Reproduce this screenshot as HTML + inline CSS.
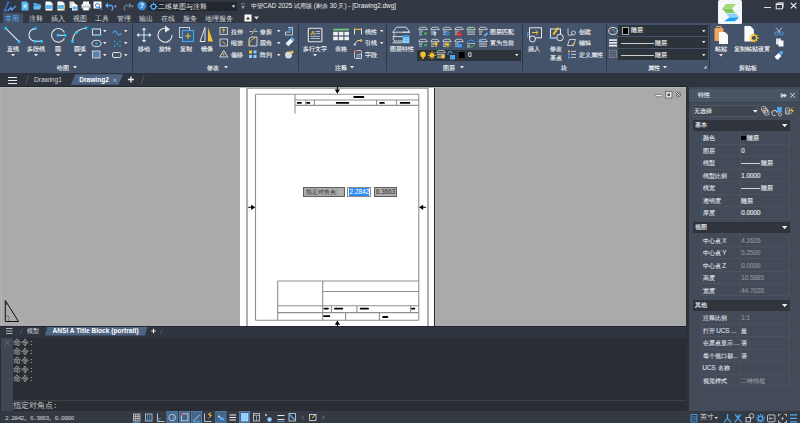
<!DOCTYPE html>
<html><head><meta charset="utf-8">
<style>
*{margin:0;padding:0;box-sizing:border-box}
html,body{width:800px;height:423px;overflow:hidden;background:#2b3039;font-family:"Liberation Sans",sans-serif;color:#e8e8e8}
.a{position:absolute}
.t{position:absolute;white-space:nowrap;line-height:1}
.lbl{font-size:6.5px;color:#e4e6ea}
.t{font-weight:500}
.s{-webkit-text-stroke:0.15px currentColor}
svg{position:absolute;overflow:visible}
</style></head><body>

<!-- title bar -->
<div class="a" style="left:0;top:0;width:800px;height:13px;background:#313843"></div>
<!-- ribbon tabs row -->
<div class="a" style="left:0;top:13px;width:800px;height:10px;background:#313843"></div>
<!-- ribbon panel -->
<div class="a" style="left:0;top:23px;width:800px;height:49.8px;background:#45536a"></div>
<!-- doc tab bar -->
<div class="a" style="left:0;top:72.8px;width:800px;height:14.2px;background:#2f353e"></div>
<!-- canvas -->
<div class="a" style="left:0;top:87px;width:686px;height:239px;background:#aaaaaa"></div>
<!-- paper -->
<div class="a" style="left:240px;top:87px;width:194px;height:239px;background:#fff"></div>
<div class="a" style="left:433.8px;top:87px;width:1.5px;height:239px;background:#262626"></div><div class="a" style="left:435.3px;top:87px;width:1px;height:239px;background:#b2b2b2"></div>
<!-- layout tab bar -->
<div class="a" style="left:0;top:326px;width:686px;height:11.6px;background:#2f353e"></div><div class="a" style="left:0;top:325.8px;width:686px;height:1.2px;background:#23272e"></div>
<!-- command area -->
<div class="a" style="left:0;top:337.6px;width:686px;height:73.4px;background:#2a2d33"></div>
<div class="a" style="left:1px;top:337.6px;width:12px;height:74.4px;background:#3e4753"></div>
<div class="a" style="left:13px;top:400px;width:673px;height:1px;background:#3c4149"></div>
<!-- properties panel -->
<div class="a" style="left:689px;top:87px;width:111px;height:324px;background:#424b57"></div>
<!-- status bar -->
<div class="a" style="left:0;top:411px;width:800px;height:12px;background:#343a43"></div>


<!-- ===== TITLE BAR CONTENT ===== -->
<svg style="left:3px;top:1px" width="14" height="12" viewBox="0 0 14 12"><path d="M5 1.5 L2 9.5" stroke="#3d6fe0" stroke-width="1.4" fill="none"/><circle cx="5" cy="1.6" r="1.3" fill="#3d6fe0"/><circle cx="2" cy="9.5" r="1.4" fill="#3d6fe0"/><path d="M4.5 10 L8 6.5 L8.5 9 L13 5" stroke="#5aa0f0" stroke-width="1.2" fill="none"/></svg>
<!-- qat icons -->
<svg style="left:21px;top:1px" width="8" height="10"><path d="M0.5 0.5h5l2 2v7h-7z" fill="#5cb8f2"/><path d="M4 3v4M2 5h4" stroke="#fff" stroke-width="0.8"/></svg>
<svg style="left:33px;top:2px" width="9" height="8"><path d="M0.5 1h3l1 1h3v1.5h-7z" fill="#4aa8e8"/><path d="M0.5 3.5h8l-1.5 4h-6.5z" fill="#66c0f5"/></svg>
<svg style="left:45px;top:1px" width="8" height="10"><path d="M0.5 0.5h5l2 2v7h-7z" fill="#fff"/><rect x="1" y="4" width="6" height="4" fill="#5cb8f2"/></svg>
<svg style="left:57px;top:1px" width="9" height="10"><path d="M0.5 0.5h5l2 2v7h-7z" fill="#fff"/><rect x="1" y="4" width="6" height="4" fill="#5cb8f2"/><path d="M6 9l2-4" stroke="#f0c020" stroke-width="1.2"/></svg>
<svg style="left:69px;top:1px" width="9" height="10"><path d="M0.5 0.5h4l1.5 1.5v5h-5.5z" fill="#ddd"/><path d="M3 3h4l1.5 1.5v5h-5.5z" fill="#fff"/><rect x="3.5" y="5.5" width="4.5" height="3" fill="#5cb8f2"/></svg>
<svg style="left:81px;top:1px" width="10" height="10"><rect x="2" y="0.5" width="6" height="3" fill="#fff"/><rect x="0.5" y="3" width="9" height="4.5" fill="#e8e8e8"/><rect x="2" y="6" width="6" height="3.5" fill="#fff" stroke="#555" stroke-width="0.4"/></svg>
<svg style="left:93px;top:1px" width="10" height="10"><rect x="0.5" y="0.5" width="8" height="7" fill="#fff"/><circle cx="4.5" cy="4.5" r="2" fill="none" stroke="#2c7bd0" stroke-width="1"/><path d="M6 6l3 3" stroke="#2c7bd0" stroke-width="1.2"/></svg>
<svg style="left:105px;top:2px" width="10" height="8"><path d="M2 3.5h4.5a3 3 0 0 1 0 5" stroke="#5aa8f0" stroke-width="1.3" fill="none"/><path d="M0 3.5l3-3v6z" fill="#5aa8f0"/></svg>
<div class="t" style="left:114px;top:4px;font-size:5px;color:#aab">▾</div>
<svg style="left:122px;top:2px" width="10" height="8"><path d="M8 3.5h-4.5a3 3 0 0 0 0 5" stroke="#6b7888" stroke-width="1.3" fill="none"/><path d="M10 3.5l-3-3v6z" fill="#6b7888"/></svg>
<div class="t" style="left:131px;top:4px;font-size:5px;color:#889">▾</div>
<svg style="left:137px;top:1px" width="10" height="10"><circle cx="4.8" cy="4.8" r="4.5" fill="#3b8fe0"/><text x="4.8" y="7.3" font-size="7" font-weight="bold" fill="#fff" text-anchor="middle" font-family="Liberation Sans">?</text></svg>
<div class="a" style="left:148px;top:2px;width:89px;height:9px;background:#22272e"></div>
<svg style="left:149px;top:2px" width="9" height="9" viewBox="0 0 9 9"><circle cx="4.5" cy="4.5" r="2.4" fill="none" stroke="#4fb0ff" stroke-width="1.2"/><path d="M4.5 0.5v1.5M4.5 7v1.5M0.5 4.5h1.5M7 4.5h1.5M1.7 1.7l1 1M6.3 6.3l1 1M1.7 7.3l1-1M6.3 2.7l1-1" stroke="#4fb0ff" stroke-width="1"/></svg>
<div class="t" style="left:158px;top:2.5px;font-size:7px;color:#e6e6e6">二维草图与注释</div>
<div class="t" style="left:231px;top:4px;font-size:5px;color:#ddd">▼</div>
<svg style="left:240px;top:3px" width="6" height="7"><path d="M1 1h4" stroke="#99a" stroke-width="0.8"/><path d="M1 3h4l-2 3z" fill="#99a"/></svg>
<div class="t" style="left:251px;top:3.3px;font-size:6.35px;letter-spacing:0px;color:#f0f0f0">中望CAD 2025 试用版 (剩余 30 天) - [Drawing2.dwg]</div>
<!-- logo -->
<div class="a" style="left:718px;top:0.4px;width:24px;height:24px;background:#f3f7fa;border-radius:1.5px"></div>
<svg style="left:718px;top:0px" width="24" height="24" viewBox="0 0 24 24"><path d="M8 4h10l-4 4.8h-10z" fill="#a6d87e"/><path d="M4 8.8h10l3 4.2h-9z" fill="#86c85a"/><path d="M8 13.4h10l3 4h-9.5z" fill="#86d2fb"/><path d="M11.5 17.4h9.5l-4 3.8h-11z" fill="#18a2f0"/></svg>
<!-- window buttons -->
<div class="a" style="left:764px;top:7.2px;width:6.5px;height:1.2px;background:#ddd"></div>
<svg style="left:775px;top:1px" width="10" height="9"><path d="M2.5 1.5h6v5" fill="none" stroke="#bbb" stroke-width="0.8"/><rect x="1.2" y="2.8" width="6.3" height="5" fill="none" stroke="#e6e6e6" stroke-width="1"/><path d="M1.2 3.4h6.3" stroke="#e6e6e6" stroke-width="1.2"/></svg>
<svg style="left:790px;top:1.5px" width="8" height="8"><path d="M0.8 0.8l5.6 5.6M6.4 0.8l-5.6 5.6" stroke="#eee" stroke-width="1.2"/></svg>

<!-- ribbon tabs -->
<div class="a" style="left:3px;top:13px;width:20px;height:10px;background:#45536a"></div>
<div class="t" style="left:5px;top:14.5px;font-size:7px;color:#4db4ff">常用</div>
<div class="t" style="left:29px;top:14.5px;font-size:7px;color:#d8dade">注释</div>
<div class="t" style="left:51px;top:14.5px;font-size:7px;color:#d8dade">插入</div>
<div class="t" style="left:73px;top:14.5px;font-size:7px;color:#d8dade">视图</div>
<div class="t" style="left:95px;top:14.5px;font-size:7px;color:#d8dade">工具</div>
<div class="t" style="left:117px;top:14.5px;font-size:7px;color:#d8dade">管理</div>
<div class="t" style="left:139px;top:14.5px;font-size:7px;color:#d8dade">输出</div>
<div class="t" style="left:161px;top:14.5px;font-size:7px;color:#d8dade">在线</div>
<div class="t" style="left:183px;top:14.5px;font-size:7px;color:#d8dade">服务</div>
<div class="t" style="left:205px;top:14.5px;font-size:7px;color:#d8dade">地理服务</div>
<svg style="left:244px;top:14px" width="16" height="8"><rect x="0.5" y="0.5" width="7" height="7" fill="#fff"/><path d="M2 5.5h4l-2-3z" fill="#333"/><path d="M10 2.5h5l-2.5 3z" fill="#ddd"/></svg>

<svg style="left:0px;top:24px" width="90" height="20" viewBox="0 0 90 20"><path d="M5.8 4.3L19.1 17.6" stroke="#e6e6e6" stroke-width="1.1"/><rect x="4.5" y="3.0" width="2.6" height="2.6" fill="#22c4ff"/><rect x="17.8" y="16.3" width="2.6" height="2.6" fill="#22c4ff"/><path d="M35.3 4.6A6.35 6.35 0 0 0 35.3 17.3H41.6" stroke="#e6e6e6" stroke-width="1.1" fill="none"/><rect x="34.0" y="3.3" width="2.6" height="2.6" fill="#22c4ff"/><rect x="34.0" y="16.0" width="2.6" height="2.6" fill="#22c4ff"/><rect x="40.300000000000004" y="16.0" width="2.6" height="2.6" fill="#22c4ff"/><path d="M64.5 8.5A6.8 6.8 0 1 0 64.5 14.2" stroke="#e6e6e6" stroke-width="1.1" fill="none"/><path d="M58 11.3H65" stroke="#e6e6e6" stroke-width="1"/><rect x="56.7" y="10.0" width="2.6" height="2.6" fill="#22c4ff"/><rect x="63.7" y="10.0" width="2.6" height="2.6" fill="#22c4ff"/><path d="M72.5 17.5Q73 6 86 4" stroke="#e6e6e6" stroke-width="1.1" fill="none"/><rect x="71.2" y="16.2" width="2.6" height="2.6" fill="#22c4ff"/><rect x="75.0" y="7.3" width="2.6" height="2.6" fill="#22c4ff"/><rect x="84.7" y="2.7" width="2.6" height="2.6" fill="#22c4ff"/></svg>
<div class="t s" style="left:-17.5px;top:45.8px;width:60px;text-align:center;font-size:6.4px;color:#eceef0">直线</div>
<div class="t s" style="left:5.799999999999997px;top:45.8px;width:60px;text-align:center;font-size:6.4px;color:#eceef0">多段线</div>
<div class="t s" style="left:28.0px;top:45.8px;width:60px;text-align:center;font-size:6.4px;color:#eceef0">圆</div>
<div class="t s" style="left:50.0px;top:45.8px;width:60px;text-align:center;font-size:6.4px;color:#eceef0">圆弧</div>
<svg style="left:10.5px;top:53.95px" width="4" height="2.5"><path d="M0 0h4l-2.0 2.5z" fill="#e8e8e8"/></svg>
<svg style="left:33.8px;top:53.95px" width="4" height="2.5"><path d="M0 0h4l-2.0 2.5z" fill="#e8e8e8"/></svg>
<svg style="left:56.0px;top:53.95px" width="4" height="2.5"><path d="M0 0h4l-2.0 2.5z" fill="#e8e8e8"/></svg>
<svg style="left:78.0px;top:53.95px" width="4" height="2.5"><path d="M0 0h4l-2.0 2.5z" fill="#e8e8e8"/></svg>
<svg style="left:90px;top:26px" width="40" height="34" viewBox="0 0 40 34"><rect x="2.5" y="3" width="8" height="6" fill="none" stroke="#e6e6e6" stroke-width="1"/><rect x="1.5" y="2.0" width="2" height="2" fill="#22c4ff"/><rect x="9.5" y="8.0" width="2" height="2" fill="#22c4ff"/><path d="M23 7q2-4 4 0t4 0" stroke="#4aa8f0" stroke-width="1.1" fill="none"/><ellipse cx="6.5" cy="17.5" rx="4.5" ry="3.2" fill="none" stroke="#e6e6e6" stroke-width="1"/><rect x="5.6" y="16.6" width="1.8" height="1.8" fill="#22c4ff"/><rect x="23.85" y="14.85" width="1.3" height="1.3" fill="#22c4ff"/><rect x="29.35" y="14.85" width="1.3" height="1.3" fill="#22c4ff"/><rect x="26.55" y="17.150000000000002" width="1.3" height="1.3" fill="#22c4ff"/><rect x="23.85" y="19.35" width="1.3" height="1.3" fill="#22c4ff"/><rect x="29.35" y="19.35" width="1.3" height="1.3" fill="#22c4ff"/><rect x="2.5" y="25" width="7.5" height="7" fill="#5a7fb0" stroke="#e6e6e6" stroke-width="0.8"/><rect x="22.5" y="26.5" width="8.5" height="5" rx="1.5" fill="none" stroke="#e6e6e6" stroke-width="1"/></svg>
<svg style="left:103.25px;top:30.4px" width="3.5" height="2.2"><path d="M0 0h3.5l-1.75 2.2z" fill="#e8e8e8"/></svg>
<svg style="left:124.25px;top:30.4px" width="3.5" height="2.2"><path d="M0 0h3.5l-1.75 2.2z" fill="#e8e8e8"/></svg>
<svg style="left:103.25px;top:42.4px" width="3.5" height="2.2"><path d="M0 0h3.5l-1.75 2.2z" fill="#e8e8e8"/></svg>
<svg style="left:124.25px;top:42.4px" width="3.5" height="2.2"><path d="M0 0h3.5l-1.75 2.2z" fill="#e8e8e8"/></svg>
<svg style="left:103.25px;top:53.9px" width="3.5" height="2.2"><path d="M0 0h3.5l-1.75 2.2z" fill="#e8e8e8"/></svg>
<svg style="left:124.25px;top:53.9px" width="3.5" height="2.2"><path d="M0 0h3.5l-1.75 2.2z" fill="#e8e8e8"/></svg>
<div class="t s" style="left:33.0px;top:64.5px;width:60px;text-align:center;font-size:6.4px;color:#eceef0">绘图</div>
<svg style="left:72.5px;top:66.3px" width="4" height="2.4"><path d="M0 0h4l-2.0 2.4z" fill="#e8e8e8"/></svg>
<div class="a" style="left:132px;top:24px;width:1px;height:47px;background:#2f3946"></div>
<svg style="left:132px;top:24px" width="90" height="22" viewBox="0 0 90 22"><path d="M12 5v12M6 11h12" stroke="#cfe3f5" stroke-width="1.1"/><path d="M12 3.5l-2.3 2.6h4.6zM12 18.5l-2.3-2.6h4.6zM4.5 11l2.6-2.3v4.6zM19.5 11l-2.6-2.3v4.6z" fill="#cfe3f5"/><path d="M37 5.5A7 7 0 1 0 40 11" stroke="#e6e6e6" stroke-width="1.1" fill="none"/><path d="M33 1.5l5 4-5 3z" fill="#e6e6e6"/><rect x="47.5" y="3.5" width="10" height="10" fill="none" stroke="#c8d0d8" stroke-width="1"/><rect x="50.5" y="6.5" width="11" height="11" fill="#3c5a7c" stroke="#4aa8f0" stroke-width="1.1"/><path d="M56 9v6M53 12h6" stroke="#f2c230" stroke-width="1"/><path d="M73 3.5L68 17.5H73z" fill="none" stroke="#e6e6e6" stroke-width="1"/><path d="M76 3.5L81 17.5H76z" fill="#f2c230"/></svg>
<div class="t s" style="left:114.0px;top:45.8px;width:60px;text-align:center;font-size:6.4px;color:#eceef0">移动</div>
<div class="t s" style="left:135.0px;top:45.8px;width:60px;text-align:center;font-size:6.4px;color:#eceef0">旋转</div>
<div class="t s" style="left:156.0px;top:45.8px;width:60px;text-align:center;font-size:6.4px;color:#eceef0">复制</div>
<div class="t s" style="left:177.0px;top:45.8px;width:60px;text-align:center;font-size:6.4px;color:#eceef0">镜像</div>
<svg style="left:219px;top:26px" width="80" height="34" viewBox="0 0 80 34"><rect x="1" y="1.5" width="7.5" height="7" fill="none" stroke="#e6e6e6" stroke-width="0.8"/><path d="M4.75 3v4M3 4.5l1.75-1.7 1.75 1.7" stroke="#f2c230" stroke-width="1" fill="none"/><rect x="1" y="13" width="7.5" height="7" fill="none" stroke="#e6e6e6" stroke-width="0.8"/><path d="M3.5 15.5l3 3" stroke="#f2c230" stroke-width="1"/><path d="M4.75 24.5l4 6.5h-8z" fill="none" stroke="#e6e6e6" stroke-width="0.9"/><path d="M4.75 27v2.5" stroke="#f2c230" stroke-width="1"/><path d="M30.5 5.5h3M35.5 5.5h3" stroke="#c8d0d8" stroke-width="0.9"/><path d="M32.5 8.5l4-6" stroke="#d8c070" stroke-width="0.9"/><path d="M30 20V14a3 3 0 0 1 3-3h5v9z" fill="none" stroke="#e6e6e6" stroke-width="0.9"/><path d="M30 20q0-6 6-8" stroke="#f2c230" stroke-width="0.9" fill="none"/><rect x="30" y="24.5" width="3" height="3" fill="#f2c230"/><rect x="34.5" y="24.5" width="3" height="3" fill="#8cd0ff"/><rect x="30" y="29" width="3" height="3" fill="#8cd0ff"/><rect x="34.5" y="29" width="3" height="3" fill="#8cd0ff"/><path d="M69 1.5h4.5v7.5h-7v-3h5" fill="none" stroke="#e0e4e8" stroke-width="0.8"/><rect x="69.5" y="2.5" width="3" height="2" fill="#4aa8f0"/><path d="M66.5 17.5l5-5 2.8 2.8-5 5z" fill="#f0f4f8"/><path d="M71.5 12.5l1.5-1.5 2.8 2.8-1.5 1.5z" fill="#5ab4f8"/><circle cx="69.5" cy="29" r="3.5" fill="#d8d8d8"/><circle cx="73" cy="26" r="1.5" fill="#f2c230"/></svg>
<div class="t s" style="left:231px;top:28.5px;font-size:6.4px;color:#eceef0;">拉伸</div>
<div class="t s" style="left:231px;top:40.2px;font-size:6.4px;color:#eceef0;">缩放</div>
<div class="t s" style="left:231px;top:51.8px;font-size:6.4px;color:#eceef0;">偏移</div>
<div class="t s" style="left:260px;top:28.5px;font-size:6.4px;color:#eceef0;">修剪</div>
<div class="t s" style="left:260px;top:40.2px;font-size:6.4px;color:#eceef0;">圆角</div>
<div class="t s" style="left:260px;top:51.8px;font-size:6.4px;color:#eceef0;">阵列</div>
<svg style="left:276.55px;top:30.4px" width="3.5" height="2.2"><path d="M0 0h3.5l-1.75 2.2z" fill="#e8e8e8"/></svg>
<svg style="left:276.55px;top:42.199999999999996px" width="3.5" height="2.2"><path d="M0 0h3.5l-1.75 2.2z" fill="#e8e8e8"/></svg>
<svg style="left:276.55px;top:53.9px" width="3.5" height="2.2"><path d="M0 0h3.5l-1.75 2.2z" fill="#e8e8e8"/></svg>
<div class="t s" style="left:183.2px;top:64.5px;width:60px;text-align:center;font-size:6.4px;color:#eceef0">修改</div>
<svg style="left:223.5px;top:66.3px" width="4" height="2.4"><path d="M0 0h4l-2.0 2.4z" fill="#e8e8e8"/></svg>
<div class="a" style="left:298px;top:24px;width:1px;height:47px;background:#2f3946"></div>
<svg style="left:300px;top:24px" width="60" height="22" viewBox="0 0 60 22"><rect x="8.3" y="4.2" width="13.6" height="13.6" rx="0.8" fill="none" stroke="#e6e6e6" stroke-width="1.1"/><text x="10.4" y="10.6" font-size="6.2" font-family="Liberation Sans" font-weight="bold" fill="#f2c230">A</text><path d="M15.5 7.5h4.5M15.5 9.5h4.5M10.5 12.3h9.5M10.5 14.5h9.5" stroke="#c8d4e0" stroke-width="0.8"/><rect x="33.2" y="4.8" width="15.8" height="1.6" fill="#6dd36d"/><rect x="33.2" y="7.8" width="4.6" height="3.6" fill="#f0f0f0"/><rect x="38.8" y="7.8" width="4.6" height="3.6" fill="#f0f0f0"/><rect x="44.4" y="7.8" width="4.6" height="3.6" fill="#f0f0f0"/><rect x="33.2" y="12.6" width="4.6" height="3.6" fill="#f0f0f0"/><rect x="38.8" y="12.6" width="4.6" height="3.6" fill="#f0f0f0"/><rect x="44.4" y="12.6" width="4.6" height="3.6" fill="#f0f0f0"/></svg>
<div class="t s" style="left:285.0px;top:45.8px;width:60px;text-align:center;font-size:6.4px;color:#eceef0">多行文字</div>
<svg style="left:313.0px;top:53.95px" width="4" height="2.5"><path d="M0 0h4l-2.0 2.5z" fill="#e8e8e8"/></svg>
<div class="t s" style="left:311.0px;top:45.8px;width:60px;text-align:center;font-size:6.4px;color:#eceef0">表格</div>
<svg style="left:353px;top:26px" width="10" height="34" viewBox="0 0 10 34"><path d="M1.5 2.5v6M8.5 2.5v6" stroke="#e8e8e8" stroke-width="1"/><path d="M1.5 3.3h7" stroke="#f2c230" stroke-width="1.1"/><path d="M1.5 18.5l3-4h4" stroke="#e6e6e6" stroke-width="0.9" fill="none"/><circle cx="8" cy="14.5" r="1.3" fill="#f2c230"/><circle cx="1.8" cy="18.5" r="1.1" fill="#e6e6e6"/><rect x="1.5" y="24.5" width="7" height="8" rx="1" fill="none" stroke="#e6e6e6" stroke-width="0.8"/><rect x="1.5" y="24.2" width="3" height="1.6" fill="#d04848"/><rect x="4" y="28.3" width="4.5" height="4.2" rx="0.8" fill="none" stroke="#e6e6e6" stroke-width="0.7"/><rect x="5.3" y="29.5" width="2" height="2" fill="#4aa8f0"/></svg>
<div class="t s" style="left:365px;top:28.5px;font-size:6.4px;color:#eceef0;">线性</div>
<div class="t s" style="left:365px;top:40.2px;font-size:6.4px;color:#eceef0;">引线</div>
<div class="t s" style="left:365px;top:51.8px;font-size:6.4px;color:#eceef0;">字段</div>
<svg style="left:380.25px;top:30.4px" width="3.5" height="2.2"><path d="M0 0h3.5l-1.75 2.2z" fill="#e8e8e8"/></svg>
<svg style="left:380.25px;top:42.199999999999996px" width="3.5" height="2.2"><path d="M0 0h3.5l-1.75 2.2z" fill="#e8e8e8"/></svg>
<div class="t s" style="left:311.0px;top:64.5px;width:60px;text-align:center;font-size:6.4px;color:#eceef0">注释</div>
<svg style="left:349.5px;top:66.3px" width="4" height="2.4"><path d="M0 0h4l-2.0 2.4z" fill="#e8e8e8"/></svg>
<div class="a" style="left:386px;top:24px;width:1px;height:47px;background:#2f3946"></div>
<svg style="left:390px;top:24px" width="24" height="22" viewBox="0 0 24 22"><path d="M6.5 3.2h9.5l3.8 5h-17z" fill="none" stroke="#e6e6e6" stroke-width="0.9"/><path d="M2.8 8.2l2 2.2-2 2.2h10M4.8 12.6l-2 2.2 2 2.2h8M4.8 17l-2 1.8h9.7M12.8 8.2h7" stroke="#e6e6e6" stroke-width="0.9" fill="none"/><rect x="12.7" y="11.6" width="6.6" height="7.6" fill="#8fd2ff"/><rect x="12.7" y="11.6" width="6.6" height="1.6" fill="#2c9cf0"/><path d="M14 14.5h4M14 16.5h4M16 13.5v5" stroke="#3a9ae8" stroke-width="0.4"/></svg>
<div class="t s" style="left:372.0px;top:45.8px;width:60px;text-align:center;font-size:6.4px;color:#eceef0">图层特性</div>
<svg style="left:0;top:0" width="800" height="72"><path d="M420.2 27.3H425.8L427.3 29.6H418.7Z" fill="none" stroke="#d8dce0" stroke-width="0.8"/><path d="M419 31.2h4M419 32.8h3M419 34.4h3" stroke="#d8dce0" stroke-width="0.7"/><circle cx="425.5" cy="33.6" r="1.3" fill="#38d048"/><path d="M419 35h3.5" stroke="#3a9cf0" stroke-width="0.8"/><path d="M432.2 27.3H437.8L439.3 29.6H430.7Z" fill="none" stroke="#d8dce0" stroke-width="0.8"/><path d="M431 31.2h4M431 32.8h3M431 34.4h3" stroke="#d8dce0" stroke-width="0.7"/><path d="M435 31.5v4.5M433.5 33h3" stroke="#dfefff" stroke-width="1.2"/><path d="M444.2 27.3H449.8L451.3 29.6H442.7Z" fill="none" stroke="#d8dce0" stroke-width="0.8"/><path d="M443 31.2h4M443 32.8h3M443 34.4h3" stroke="#d8dce0" stroke-width="0.7"/><circle cx="447" cy="33.5" r="2" fill="none" stroke="#3a9cf0" stroke-width="0.9"/><path d="M445.6 32.1l2.8 2.8M448.4 32.1l-2.8 2.8" stroke="#3a9cf0" stroke-width="0.6"/><path d="M456.2 27.3H461.8L463.3 29.6H454.7Z" fill="none" stroke="#d8dce0" stroke-width="0.8"/><path d="M455 31.2h4M455 32.8h3M455 34.4h3" stroke="#d8dce0" stroke-width="0.7"/><rect x="457" y="33" width="4.5" height="3.2" fill="#e03838"/><path d="M457.8 33v-1a1.45 1.45 0 0 1 2.9 0v1" stroke="#e03838" stroke-width="0.7" fill="none"/><path d="M468.2 27.3H473.8L475.3 29.6H466.7Z" fill="none" stroke="#d8dce0" stroke-width="0.8"/><path d="M467 31.2h8M467 32.8h8M467 34.4h8" stroke="#d8dce0" stroke-width="0.7"/><path d="M468.5 29.5l1.5-1.6 1.5 1.6M470 28.2v3" stroke="#38d048" stroke-width="0.9" fill="none"/><path d="M480.2 27.3H485.8L487.3 29.6H478.7Z" fill="none" stroke="#d8dce0" stroke-width="0.8"/><path d="M479 31.2h4M479 32.8h3M479 34.4h3" stroke="#d8dce0" stroke-width="0.7"/><path d="M483.5 35.5l3.5-3 1.2 1.2-3.5 3z" fill="#5ab4f8"/><path d="M420.2 39.300000000000004H425.8L427.3 41.6H418.7Z" fill="none" stroke="#d8dce0" stroke-width="0.8"/><path d="M419 43.2h4M419 44.800000000000004h3M419 46.400000000000006h3" stroke="#d8dce0" stroke-width="0.7"/><circle cx="425.5" cy="45" r="1.3" fill="#38d048"/><path d="M419 46.3h3.5" stroke="#3a9cf0" stroke-width="0.8"/><path d="M432.2 39.300000000000004H437.8L439.3 41.6H430.7Z" fill="none" stroke="#d8dce0" stroke-width="0.8"/><path d="M431 43.2h4M431 44.800000000000004h3M431 46.400000000000006h3" stroke="#d8dce0" stroke-width="0.7"/><circle cx="436" cy="43.8" r="1.7" fill="#f2c230"/><rect x="435.3" y="45.2" width="1.4" height="1.6" fill="#f2c230"/><path d="M444.2 39.300000000000004H449.8L451.3 41.6H442.7Z" fill="none" stroke="#d8dce0" stroke-width="0.8"/><path d="M443 43.2h4M443 44.800000000000004h3M443 46.400000000000006h3" stroke="#d8dce0" stroke-width="0.7"/><circle cx="447.5" cy="44.5" r="1.6" fill="#f2c230"/><circle cx="447.5" cy="44.5" r="2.6" fill="none" stroke="#f2c230" stroke-width="0.8" stroke-dasharray="0.9 0.7"/><path d="M456.2 39.300000000000004H461.8L463.3 41.6H454.7Z" fill="none" stroke="#d8dce0" stroke-width="0.8"/><path d="M455 43.2h4M455 44.800000000000004h3M455 46.400000000000006h3" stroke="#d8dce0" stroke-width="0.7"/><rect x="457.5" y="44.2" width="4.5" height="3.2" fill="#3aa0ff"/><path d="M456.5 44v-1a1.45 1.45 0 0 1 2.9 0" stroke="#3aa0ff" stroke-width="0.7" fill="none"/><path d="M480.2 39.300000000000004H485.8L487.3 41.6H478.7Z" fill="none" stroke="#d8dce0" stroke-width="0.8"/><path d="M479 43.2h8M479 44.800000000000004h8M479 46.400000000000006h8" stroke="#d8dce0" stroke-width="0.7"/><rect x="479" y="39.2" width="3" height="2" fill="#3aa0ff"/><path d="M467 42.5q4-5 8 0" stroke="#3aa0ff" stroke-width="0.9" fill="none"/><path d="M467 43.5h8M467 45.3h3M467 47h3" stroke="#d8dce0" stroke-width="0.7"/><path d="M469.5 45.5l1.8 1.8 3.5-3" stroke="#38d048" stroke-width="1" fill="none"/></svg>
<div class="t s" style="left:490px;top:28.5px;font-size:6.4px;color:#eceef0;">图层匹配</div>
<div class="t s" style="left:490px;top:40.2px;font-size:6.4px;color:#eceef0;">置为当前</div>
<div class="a" style="left:417px;top:50px;width:103.5px;height:10.5px;background:#2d333b"></div>
<svg style="left:417px;top:50px" width="60" height="11" viewBox="0 0 60 11"><ellipse cx="6" cy="4.5" rx="2.8" ry="3" fill="#f2c230"/><rect x="5" y="7" width="2" height="2" fill="#cfa020"/><circle cx="15" cy="5.3" r="2.3" fill="#f2c230"/><path d="M15 1v8.6M10.7 5.3h8.6M12 2.3l6 6M18 2.3l-6 6" stroke="#f2c230" stroke-width="0.8"/><path d="M21.2 0.6000000000000001H26.8L28.3 2.9H19.7Z" fill="none" stroke="#d8dce0" stroke-width="0.8"/><path d="M20 4.5h8M20 6.1h8M20 7.699999999999999h8" stroke="#d8dce0" stroke-width="0.7"/><circle cx="26" cy="6.5" r="2" fill="#f2c230"/><path d="M31 5V3.5a2 2 0 0 1 4 0" stroke="#4aa8f0" stroke-width="1" fill="none"/><rect x="33" y="5" width="5" height="4.5" fill="#4aa8f0"/><rect x="41.5" y="1.7" width="6.5" height="7" fill="#000" stroke="#555" stroke-width="0.4"/></svg>
<div class="t s" style="left:468px;top:52.2px;font-size:6.5px;color:#e8e8e8;">0</div>
<svg style="left:515.25px;top:54.199999999999996px" width="3.5" height="2.2"><path d="M0 0h3.5l-1.75 2.2z" fill="#e8e8e8"/></svg>
<div class="t s" style="left:419.0px;top:64.5px;width:60px;text-align:center;font-size:6.4px;color:#eceef0">图层</div>
<svg style="left:460.0px;top:66.3px" width="4" height="2.4"><path d="M0 0h4l-2.0 2.4z" fill="#e8e8e8"/></svg>
<div class="a" style="left:522px;top:24px;width:1px;height:47px;background:#2f3946"></div>
<svg style="left:522px;top:24px" width="45" height="22" viewBox="0 0 45 22"><rect x="7.5" y="3.8" width="12" height="10" fill="none" stroke="#e6e6e6" stroke-width="1"/><path d="M10 8.5h5.5M13.8 6.3l2.2 2.2-2.2 2.2" stroke="#f2c230" stroke-width="1" fill="none"/><circle cx="10.5" cy="15" r="3" fill="#45536a" stroke="#e6e6e6" stroke-width="1"/><path d="M7.2 8.5h-1.5v5" stroke="#4aa8f0" stroke-width="0.9" fill="none"/><rect x="28.5" y="5" width="10" height="9" fill="none" stroke="#e6e6e6" stroke-width="1"/><path d="M30.5 10l5-7 1.5 1.2-5 7z" fill="#f2c230"/><circle cx="38" cy="13.5" r="3.3" fill="#45536a" stroke="#e6e6e6" stroke-width="1"/><rect x="27.5" y="13" width="1.8" height="1.8" fill="#22c4ff"/></svg>
<div class="t s" style="left:504.29999999999995px;top:45.8px;width:60px;text-align:center;font-size:6.4px;color:#eceef0">插入</div>
<div class="t s" style="left:525.5px;top:45.8px;width:60px;text-align:center;font-size:6.4px;color:#eceef0">修改</div>
<div class="t s" style="left:525.5px;top:54.6px;width:60px;text-align:center;font-size:6.4px;color:#eceef0">基点</div>
<svg style="left:566px;top:26px" width="12" height="34" viewBox="0 0 12 34"><path d="M2 2.5v5a2 2 0 0 0 4 0" stroke="#e6e6e6" stroke-width="0.8" fill="none"/><circle cx="7.5" cy="7" r="2" fill="none" stroke="#e6e6e6" stroke-width="0.8"/><path d="M1.5 19.5l2-6h6l-2 6z" fill="none" stroke="#e6e6e6" stroke-width="0.8"/><path d="M6 19l3-3" stroke="#f2c230" stroke-width="1"/><rect x="2" y="24.5" width="1.8" height="1.8" fill="#f2c230"/><rect x="2" y="27.5" width="1.8" height="1.8" fill="#4aa8f0"/><rect x="2" y="30.5" width="1.8" height="1.8" fill="#4aa8f0"/><path d="M5 25.4h5M5 28.4h5M5 31.4h5" stroke="#e6e6e6" stroke-width="0.8"/></svg>
<div class="t s" style="left:579px;top:28.5px;font-size:6.4px;color:#eceef0;">创建</div>
<div class="t s" style="left:579px;top:40.2px;font-size:6.4px;color:#eceef0;">编辑</div>
<div class="t s" style="left:579px;top:51.8px;font-size:6.4px;color:#eceef0;">定义属性</div>
<div class="t s" style="left:533.5px;top:64.5px;width:60px;text-align:center;font-size:6.4px;color:#eceef0">块</div>
<div class="a" style="left:606px;top:24px;width:1px;height:47px;background:#2f3946"></div>
<svg style="left:608px;top:26px" width="10" height="34" viewBox="0 0 10 34"><ellipse cx="5" cy="5" rx="4.3" ry="3.5" fill="none" stroke="#e6e6e6" stroke-width="0.9"/><circle cx="3.5" cy="4.3" r="0.9" fill="#e04040"/><circle cx="5.5" cy="3.6" r="0.9" fill="#40c040"/><circle cx="6.4" cy="5.6" r="0.9" fill="#4090f0"/><rect x="1" y="13.3" width="8" height="1.6" fill="#f0f0f0"/><rect x="1" y="16" width="8" height="1.6" fill="#f0f0f0"/><rect x="1" y="18.7" width="8" height="1.8" fill="#f0f0f0"/><rect x="1.5" y="24.5" width="7" height="7" fill="none" stroke="#889" stroke-width="0.8"/><path d="M2.5 26.5h5M2.5 28.5h5M2.5 30h5" stroke="#889" stroke-width="0.6"/></svg>
<div class="a" style="left:618.4px;top:25.3px;width:89.3px;height:10.7px;background:#2d333b"></div>
<svg style="left:702.25px;top:29.549999999999997px" width="3.5" height="2.2"><path d="M0 0h3.5l-1.75 2.2z" fill="#e8e8e8"/></svg>
<div class="a" style="left:618.4px;top:37.4px;width:89.3px;height:10.200000000000003px;background:#2d333b"></div>
<svg style="left:702.25px;top:41.4px" width="3.5" height="2.2"><path d="M0 0h3.5l-1.75 2.2z" fill="#e8e8e8"/></svg>
<div class="a" style="left:618.4px;top:49.3px;width:89.3px;height:10.700000000000003px;background:#2d333b"></div>
<svg style="left:702.25px;top:53.55px" width="3.5" height="2.2"><path d="M0 0h3.5l-1.75 2.2z" fill="#e8e8e8"/></svg>
<div class="a" style="left:621.5px;top:27px;width:7.5px;height:7.5px;background:#000;border:0.6px solid #aaa"></div>
<div class="t s" style="left:631px;top:27.3px;font-size:6.3px;color:#e8e8e8;">随层</div>
<div class="a" style="left:621px;top:42.6px;width:33px;height:0.9px;background:#d0d0d0"></div>
<div class="a" style="left:621px;top:54.8px;width:33px;height:0.9px;background:#d0d0d0"></div>
<div class="t s" style="left:654.5px;top:40.0px;font-size:6.3px;color:#e8e8e8;">随层</div>
<div class="t s" style="left:654.5px;top:52.0px;font-size:6.3px;color:#e8e8e8;">随层</div>
<div class="t s" style="left:623.6px;top:64.5px;width:60px;text-align:center;font-size:6.4px;color:#eceef0">属性</div>
<svg style="left:662.5px;top:66.3px" width="4" height="2.4"><path d="M0 0h4l-2.0 2.4z" fill="#e8e8e8"/></svg>
<svg style="left:703px;top:65px" width="4" height="4" viewBox="0 0 4 4"><path d="M3.5 0.5v3h-3z" fill="#ccc"/></svg>
<div class="a" style="left:709px;top:24px;width:1px;height:47px;background:#2f3946"></div>
<svg style="left:710px;top:24px" width="80" height="22" viewBox="0 0 80 22"><rect x="4.5" y="4" width="9" height="13" rx="1" fill="#f0a860"/><rect x="7" y="2.5" width="4" height="3" fill="none" stroke="#f0a860" stroke-width="1"/><path d="M9 8h6l3 3v9h-9z" fill="#fafafa"/><g transform="translate(-2.6,-0.6)"><path d="M37 2.5h6l3.5 3.5v12h-9.5z" fill="#fafafa"/><circle cx="46.5" cy="14.5" r="2.6" fill="#3b4a6a" stroke="#f2c230" stroke-width="1.3"/><circle cx="46.5" cy="14.5" r="3.9" fill="none" stroke="#f2c230" stroke-width="1.3" stroke-dasharray="1.2 1.1"/></g><path d="M66 3.5l4 5M72 3.5l-4 5" stroke="#b0c8e0" stroke-width="0.9"/><circle cx="66.5" cy="9.5" r="1.7" fill="none" stroke="#4aa8f0" stroke-width="0.9"/><circle cx="71.5" cy="9.5" r="1.7" fill="none" stroke="#4aa8f0" stroke-width="0.9"/><rect x="66" y="14.5" width="5" height="6" fill="#d8e0e8"/><rect x="68.5" y="16.5" width="5" height="6" fill="#fafafa"/></svg>
<svg style="left:773px;top:50px" width="11" height="10" viewBox="0 0 11 10"><path d="M1.5 7l4-4 3 3-4 4z" fill="#fafafa"/><path d="M5.5 3l3-2.5 2 2-2.5 3z" fill="#4aa8f0"/></svg>
<div class="t s" style="left:691.0px;top:45.8px;width:60px;text-align:center;font-size:6.4px;color:#eceef0">粘贴</div>
<svg style="left:719.0px;top:53.95px" width="4" height="2.5"><path d="M0 0h4l-2.0 2.5z" fill="#e8e8e8"/></svg>
<div class="t s" style="left:721.5px;top:45.8px;width:60px;text-align:center;font-size:6.4px;color:#eceef0">复制粘贴设置</div>
<div class="t s" style="left:718.0px;top:64.5px;width:60px;text-align:center;font-size:6.4px;color:#eceef0">剪贴板</div><div class="a" style="left:1px;top:87px;width:685px;height:1px;background:#b6b6b6"></div>
<div class="a" style="left:1px;top:87px;width:1px;height:239px;background:#b4b4b4"></div>
<svg style="left:0;top:0" width="800" height="423" viewBox="0 0 800 423"><defs><clipPath id="cv"><rect x="0" y="87" width="686" height="239"/></clipPath></defs><g clip-path="url(#cv)"><line x1="247" y1="88.3" x2="428" y2="88.3" stroke="#a2a2a2" stroke-width="1.6"/><line x1="247" y1="88.3" x2="247" y2="330" stroke="#a2a2a2" stroke-width="1.7"/><line x1="428" y1="88.3" x2="428" y2="330" stroke="#a2a2a2" stroke-width="1.7"/><line x1="255.5" y1="94.2" x2="418.8" y2="94.2" stroke="#8f8f8f" stroke-width="1.1"/><line x1="255.5" y1="94.2" x2="255.5" y2="320.3" stroke="#8f8f8f" stroke-width="1.1"/><line x1="418.8" y1="94.2" x2="418.8" y2="320.3" stroke="#8f8f8f" stroke-width="1.1"/><line x1="255.5" y1="320.3" x2="418.8" y2="320.3" stroke="#8f8f8f" stroke-width="1.1"/><line x1="295" y1="94.2" x2="295" y2="113.6" stroke="#8f8f8f" stroke-width="1.1"/><line x1="295" y1="100" x2="418.8" y2="100" stroke="#8f8f8f" stroke-width="1.1"/><line x1="295" y1="105.4" x2="418.8" y2="105.4" stroke="#8f8f8f" stroke-width="1.1"/><line x1="305.8" y1="100" x2="305.8" y2="105.4" stroke="#8f8f8f" stroke-width="1.1"/><line x1="314.4" y1="100" x2="314.4" y2="105.4" stroke="#8f8f8f" stroke-width="1.1"/><line x1="376.5" y1="100" x2="376.5" y2="105.4" stroke="#8f8f8f" stroke-width="1.1"/><line x1="396.5" y1="100" x2="396.5" y2="105.4" stroke="#8f8f8f" stroke-width="1.1"/><line x1="354.1" y1="97" x2="363.4" y2="97" stroke="#000" stroke-width="1.8" stroke-linecap="round"/><line x1="297.70000000000005" y1="102.9" x2="301.0" y2="102.9" stroke="#000" stroke-width="1.8" stroke-linecap="round"/><line x1="307.20000000000005" y1="102.9" x2="309.4" y2="102.9" stroke="#000" stroke-width="1.8" stroke-linecap="round"/><line x1="336.70000000000005" y1="102.9" x2="348.29999999999995" y2="102.9" stroke="#000" stroke-width="1.8" stroke-linecap="round"/><line x1="380.1" y1="102.9" x2="383.9" y2="102.9" stroke="#000" stroke-width="1.8" stroke-linecap="round"/><line x1="400.6" y1="102.9" x2="409.4" y2="102.9" stroke="#000" stroke-width="1.8" stroke-linecap="round"/><line x1="277.7" y1="281" x2="418.8" y2="281" stroke="#8f8f8f" stroke-width="1.1"/><line x1="277.7" y1="281" x2="277.7" y2="320.3" stroke="#8f8f8f" stroke-width="1.1"/><line x1="322.7" y1="281" x2="322.7" y2="320.3" stroke="#8f8f8f" stroke-width="1.1"/><line x1="322.7" y1="291.5" x2="418.8" y2="291.5" stroke="#8f8f8f" stroke-width="1.1"/><line x1="277.7" y1="305.8" x2="418.8" y2="305.8" stroke="#8f8f8f" stroke-width="1.1"/><line x1="277.7" y1="312.6" x2="418.8" y2="312.6" stroke="#8f8f8f" stroke-width="1.1"/><line x1="331.4" y1="305.8" x2="331.4" y2="312.6" stroke="#8f8f8f" stroke-width="1.1"/><line x1="356.9" y1="305.8" x2="356.9" y2="312.6" stroke="#8f8f8f" stroke-width="1.1"/><line x1="410.6" y1="305.8" x2="410.6" y2="312.6" stroke="#8f8f8f" stroke-width="1.1"/><line x1="345.6" y1="312.6" x2="345.6" y2="320.3" stroke="#8f8f8f" stroke-width="1.1"/><line x1="379.4" y1="312.6" x2="379.4" y2="320.3" stroke="#8f8f8f" stroke-width="1.1"/><line x1="324.40000000000003" y1="308.6" x2="328.0" y2="308.6" stroke="#000" stroke-width="1.8" stroke-linecap="round"/><line x1="334.8" y1="308.6" x2="342.29999999999995" y2="308.6" stroke="#000" stroke-width="1.8" stroke-linecap="round"/><line x1="360.6" y1="308.6" x2="368.15" y2="308.6" stroke="#000" stroke-width="1.8" stroke-linecap="round"/><line x1="411.90000000000003" y1="308.6" x2="414.4" y2="308.6" stroke="#000" stroke-width="1.8" stroke-linecap="round"/><line x1="324.1" y1="316.2" x2="329.4" y2="316.2" stroke="#000" stroke-width="1.8" stroke-linecap="round"/><line x1="383.1" y1="317" x2="387.4" y2="317" stroke="#000" stroke-width="1.8" stroke-linecap="round"/><path d="M337.4 93.8l-2.6-4.2h5.2z" fill="#000"/><path d="M337.4 87v3" stroke="#000" stroke-width="1"/><path d="M337.4 320.6l-2.6 4.2h5.2z" fill="#000"/><path d="M337.4 324v2.5" stroke="#000" stroke-width="1"/><path d="M255.3 207.3l-4.2-2.6v5.2z" fill="#000"/><path d="M248.2 207.3h4" stroke="#000" stroke-width="1"/><path d="M419 207.3l4.2-2.6v5.2z" fill="#000"/><path d="M422 207.3h4" stroke="#000" stroke-width="1"/><path d="M5.3 300.5V321.5H18.5Z" fill="none" stroke="#111" stroke-width="1"/><path d="M5.3 316h3.5v5.5M9 321.5" stroke="#111" stroke-width="0.6" stroke-dasharray="1 1" fill="none"/><path d="M5.5 305.5l1.2-3" stroke="#111" stroke-width="0.7"/></g></svg>
<div class="a" style="left:303px;top:187px;width:41.6px;height:10px;background:#adadad;border:1px solid #5e5e5e"></div>
<div class="t" style="left:305.5px;top:188.8px;font-size:6.4px;color:#2a2a2a">指定对角点:</div>
<div class="a" style="left:347px;top:186.7px;width:24px;height:10.8px;background:#fff;border:1px solid #8a8a8a"></div>
<div class="a" style="left:349.4px;top:187.9px;width:19.8px;height:8.5px;background:#2f8cf5"></div>
<div class="t" style="left:349.6px;top:189.1px;font-size:6.4px;color:#fff">2.2842</div>
<div class="a" style="left:373.7px;top:187px;width:23.8px;height:10px;background:#adadad;border:1px solid #5e5e5e"></div>
<div class="t" style="left:376px;top:188.9px;font-size:6.3px;color:#2a2a2a">6.3663</div>
<svg style="left:650px;top:88px" width="36" height="14"><rect x="5.5" y="6.5" width="7" height="2.2" rx="1.1" fill="#e8e8e8" stroke="#555" stroke-width="0.6"/><rect x="15.5" y="3.5" width="6.5" height="6.5" fill="#e0e0e0" stroke="#555" stroke-width="0.7"/><rect x="17.5" y="5.5" width="2.5" height="2.5" fill="#555"/><path d="M26 4l5 5M31 4l-5 5" stroke="#555" stroke-width="2"/><path d="M26 4l5 5M31 4l-5 5" stroke="#e8e8e8" stroke-width="0.9"/></svg><div class="a" style="left:689px;top:89px;width:110px;height:13px;background:#4a5564;"></div>
<div class="a" style="left:689px;top:102px;width:111px;height:1px;background:#3a424c;"></div>
<div class="t s" style="left:698px;top:92.3px;font-size:6.4px;color:#e4e6ea;">特性</div>
<svg style="left:780px;top:92px" width="18" height="7"><path d="M1.2 1.3v4.4" stroke="#eee" stroke-width="0.8"/><path d="M2 1.3l2.4 2.2-2.4 2.2zM4.3 1.3l2.4 2.2-2.4 2.2z" fill="#eee"/><path d="M10.3 1l4.6 4.6M14.9 1l-4.6 4.6" stroke="#eee" stroke-width="0.85"/></svg>
<div class="a" style="left:692.3px;top:105px;width:66.2px;height:11.7px;background:#3e4650;border:0.6px solid #4e5662"></div>
<div class="t s" style="left:694px;top:107.5px;font-size:6.4px;color:#e0e2e6;">无选择</div>
<svg style="left:752.5px;top:109.5px" width="5" height="3"><path d="M0 0h4.5l-2.25 2.8z" fill="#eee"/></svg>
<svg style="left:760px;top:105px" width="38" height="12"><rect x="1.5" y="1.5" width="4.5" height="4.5" rx="1" fill="none" stroke="#ccc" stroke-width="0.7"/><rect x="3" y="3.5" width="4.5" height="4.5" rx="1" fill="none" stroke="#ddd" stroke-width="0.7"/><rect x="4.5" y="5.5" width="4.5" height="4.5" rx="1" fill="none" stroke="#ddd" stroke-width="0.7"/><circle cx="5" cy="6" r="1" fill="#e0b040"/><rect x="17" y="2" width="4.8" height="5.5" fill="#4aa8f0"/><path d="M17 7.8a2.6 2.6 0 1 0 -1.5 2.6" fill="none" stroke="#ddd" stroke-width="0.9"/><circle cx="20" cy="9.5" r="1.5" fill="none" stroke="#ddd" stroke-width="0.7"/><path d="M25.5 3h4v6h-4z" fill="none" stroke="#ccc" stroke-width="0.7"/><circle cx="27.5" cy="7" r="1.6" fill="none" stroke="#ddd" stroke-width="0.6"/><path d="M32.5 2l-2.5 4h2l-1.5 4 3.5-5h-2z" fill="#f2c230"/></svg>
<div class="a" style="left:693px;top:119.6px;width:96.8px;height:11.3px;background:#30353d;"></div>
<div class="t s" style="left:694.5px;top:122.0px;font-size:6.4px;color:#e8eaee;">基本</div>
<svg style="left:782px;top:123.89999999999999px" width="6" height="3.5"><path d="M0 0h5.4l-2.7 3.2z" fill="#eee"/></svg>
<div class="a" style="left:700.8px;top:131px;width:89.3px;height:87.5px;border:0.6px solid #4b535e;border-top:none"></div>
<div class="t s" style="left:702.5px;top:135.3px;font-size:6.3px;color:#d8dbe0;">颜色</div>
<div class="a" style="left:741.2px;top:135.6px;width:4.8px;height:4.8px;background:#000;"></div>
<div class="t s" style="left:747.3px;top:135.3px;font-size:6.3px;color:#e6e8ea;">随层</div>
<div class="a" style="left:700.8px;top:143.5px;width:89.3px;height:0.6px;background:#4b535e;"></div>
<div class="t s" style="left:702.5px;top:147.8px;font-size:6.3px;color:#d8dbe0;">图层</div>
<div class="t s" style="left:741.2px;top:147.8px;font-size:6.3px;color:#e6e8ea;">0</div>
<div class="a" style="left:700.8px;top:156.0px;width:89.3px;height:0.6px;background:#4b535e;"></div>
<div class="t s" style="left:702.5px;top:160.3px;font-size:6.3px;color:#d8dbe0;">线型</div>
<div class="a" style="left:741px;top:162.9px;width:19px;height:0.8px;background:#d0d4d8;"></div>
<div class="t s" style="left:761px;top:160.3px;font-size:6.3px;color:#e6e8ea;">随层</div>
<div class="a" style="left:700.8px;top:168.5px;width:89.3px;height:0.6px;background:#4b535e;"></div>
<div class="t s" style="left:702.5px;top:172.8px;font-size:6.3px;color:#d8dbe0;">线型比例</div>
<div class="t s" style="left:741.2px;top:172.8px;font-size:6.3px;color:#e6e8ea;">1.0000</div>
<div class="a" style="left:700.8px;top:181.0px;width:89.3px;height:0.6px;background:#4b535e;"></div>
<div class="t s" style="left:702.5px;top:185.3px;font-size:6.3px;color:#d8dbe0;">线宽</div>
<div class="a" style="left:741px;top:187.9px;width:19px;height:0.8px;background:#d0d4d8;"></div>
<div class="t s" style="left:761px;top:185.3px;font-size:6.3px;color:#e6e8ea;">随层</div>
<div class="a" style="left:700.8px;top:193.5px;width:89.3px;height:0.6px;background:#4b535e;"></div>
<div class="t s" style="left:702.5px;top:197.8px;font-size:6.3px;color:#d8dbe0;">透明度</div>
<div class="t s" style="left:741.2px;top:197.8px;font-size:6.3px;color:#e6e8ea;">随层</div>
<div class="a" style="left:700.8px;top:206.0px;width:89.3px;height:0.6px;background:#4b535e;"></div>
<div class="t s" style="left:702.5px;top:210.3px;font-size:6.3px;color:#d8dbe0;">厚度</div>
<div class="t s" style="left:741.2px;top:210.3px;font-size:6.3px;color:#e6e8ea;">0.0000</div>
<div class="a" style="left:739.8px;top:131px;width:0.6px;height:87.5px;background:#4b535e;"></div>
<div class="a" style="left:693px;top:222px;width:96.8px;height:11.3px;background:#30353d;"></div>
<div class="t s" style="left:694.5px;top:224.4px;font-size:6.4px;color:#e8eaee;">视图</div>
<svg style="left:782px;top:226.3px" width="6" height="3.5"><path d="M0 0h5.4l-2.7 3.2z" fill="#eee"/></svg>
<div class="a" style="left:700.8px;top:233.4px;width:89.3px;height:62.5px;border:0.6px solid #4b535e;border-top:none"></div>
<div class="t s" style="left:702.5px;top:237.70000000000002px;font-size:6.3px;color:#d8dbe0;">中心点 X</div>
<div class="t s" style="left:741.2px;top:237.70000000000002px;font-size:6.3px;color:#8c939c;">4.2626</div>
<div class="a" style="left:700.8px;top:245.9px;width:89.3px;height:0.6px;background:#4b535e;"></div>
<div class="t s" style="left:702.5px;top:250.20000000000002px;font-size:6.3px;color:#d8dbe0;">中心点 Y</div>
<div class="t s" style="left:741.2px;top:250.20000000000002px;font-size:6.3px;color:#8c939c;">5.2500</div>
<div class="a" style="left:700.8px;top:258.4px;width:89.3px;height:0.6px;background:#4b535e;"></div>
<div class="t s" style="left:702.5px;top:262.7px;font-size:6.3px;color:#d8dbe0;">中心点 Z</div>
<div class="t s" style="left:741.2px;top:262.7px;font-size:6.3px;color:#8c939c;">0.0000</div>
<div class="a" style="left:700.8px;top:270.9px;width:89.3px;height:0.6px;background:#4b535e;"></div>
<div class="t s" style="left:702.5px;top:275.2px;font-size:6.3px;color:#d8dbe0;">高度</div>
<div class="t s" style="left:741.2px;top:275.2px;font-size:6.3px;color:#8c939c;">10.5885</div>
<div class="a" style="left:700.8px;top:283.4px;width:89.3px;height:0.6px;background:#4b535e;"></div>
<div class="t s" style="left:702.5px;top:287.7px;font-size:6.3px;color:#d8dbe0;">宽度</div>
<div class="t s" style="left:741.2px;top:287.7px;font-size:6.3px;color:#8c939c;">44.7028</div>
<div class="a" style="left:739.8px;top:233.4px;width:0.6px;height:62.5px;background:#4b535e;"></div>
<div class="a" style="left:693px;top:299.6px;width:96.8px;height:11.3px;background:#30353d;"></div>
<div class="t s" style="left:694.5px;top:302.0px;font-size:6.4px;color:#e8eaee;">其他</div>
<svg style="left:782px;top:303.90000000000003px" width="6" height="3.5"><path d="M0 0h5.4l-2.7 3.2z" fill="#eee"/></svg>
<div class="a" style="left:700.8px;top:311px;width:89.3px;height:75.0px;border:0.6px solid #4b535e;border-top:none"></div>
<div class="t s" style="left:702.5px;top:315.3px;font-size:6.3px;color:#d8dbe0;">注释比例</div>
<div class="t s" style="left:741.2px;top:315.3px;font-size:6.3px;color:#8c939c;">1:1</div>
<div class="a" style="left:700.8px;top:323.5px;width:89.3px;height:0.6px;background:#4b535e;"></div>
<div class="t s" style="left:702.5px;top:327.8px;font-size:6.3px;color:#d8dbe0;">打开 UCS ...</div>
<div class="t s" style="left:741.2px;top:327.8px;font-size:6.3px;color:#e6e8ea;">是</div>
<div class="a" style="left:700.8px;top:336.0px;width:89.3px;height:0.6px;background:#4b535e;"></div>
<div class="t s" style="left:702.5px;top:340.3px;font-size:6.3px;color:#d8dbe0;">在原点显示 ...</div>
<div class="t s" style="left:741.2px;top:340.3px;font-size:6.3px;color:#e6e8ea;">否</div>
<div class="a" style="left:700.8px;top:348.5px;width:89.3px;height:0.6px;background:#4b535e;"></div>
<div class="t s" style="left:702.5px;top:352.8px;font-size:6.3px;color:#d8dbe0;">每个视口都...</div>
<div class="t s" style="left:741.2px;top:352.8px;font-size:6.3px;color:#e6e8ea;">否</div>
<div class="a" style="left:700.8px;top:361.0px;width:89.3px;height:0.6px;background:#4b535e;"></div>
<div class="t s" style="left:702.5px;top:365.3px;font-size:6.3px;color:#d8dbe0;">UCS 名称</div>
<div class="t s" style="left:741.2px;top:365.3px;font-size:6.3px;color:#e6e8ea;"></div>
<div class="a" style="left:700.8px;top:373.5px;width:89.3px;height:0.6px;background:#4b535e;"></div>
<div class="t s" style="left:702.5px;top:377.8px;font-size:6.3px;color:#d8dbe0;">视觉样式</div>
<div class="t s" style="left:741.2px;top:377.8px;font-size:6.3px;color:#8c939c;">二维线框</div>
<div class="a" style="left:739.8px;top:311px;width:0.6px;height:75.0px;background:#4b535e;"></div><div class="a" style="left:0px;top:86px;width:686px;height:1px;background:#23282f;"></div>
<svg style="left:0;top:72px" width="160" height="14"><path d="M8 5.5h9M8 8.5h9M8 11.5h9" stroke="#e8e8e8" stroke-width="1"/><path d="M25.5 12.5l3-9" stroke="#59606a" stroke-width="0.8"/><path d="M75.2 2.2H123L118.7 12.8H70.9Z" fill="#4f6482"/><path d="M113.3 6.6l3.4 3.4M116.7 6.6l-3.4 3.4" stroke="#b8c0cc" stroke-width="0.8"/><path d="M130.9 4.5v6M127.9 7.5h6" stroke="#f4f4f4" stroke-width="1.3"/><path d="M141 12.5l3-9" stroke="#59606a" stroke-width="0.8"/></svg>
<div class="t" style="left:34px;top:76.9px;font-size:6.6px;color:#d4d7dc;">Drawing1</div>
<div class="t" style="left:79.2px;top:76.9px;font-size:6.6px;color:#ffffff;font-weight:bold">Drawing2</div>
<svg style="left:0;top:326px" width="170" height="10"><path d="M6 2.5h6.5M6 5h6.5M6 7.5h6.5" stroke="#d8d8d8" stroke-width="0.8"/><path d="M20.5 8.5l1.8-6" stroke="#59606a" stroke-width="0.7"/><path d="M47.2 1H147.4L145.1 9.4H45Z" fill="#4f6482"/><path d="M153.5 2.8v4.4M151.3 5h4.4" stroke="#f0f0f0" stroke-width="1.1"/><path d="M160.5 8.5l1.5-6" stroke="#59606a" stroke-width="0.7"/></svg>
<div class="t" style="left:27px;top:327.9px;font-size:6.4px;color:#e6e8ec;">模型</div>
<div class="t" style="left:52.5px;top:327.5px;font-size:6.6px;color:#ffffff;font-weight:bold">ANSI A Title Block (portrait)</div>
<svg style="left:1px;top:337px" width="12" height="12"><path d="M3.5 3l5.5 5.5M9 3l-5.5 5.5" stroke="#6c7580" stroke-width="0.8"/></svg>
<div class="t" style="left:13px;top:339.4px;font-size:7.9px;color:#b6babe;font-family:'Liberation Mono',monospace">命令:</div>
<div class="t" style="left:13px;top:348.28px;font-size:7.9px;color:#b6babe;font-family:'Liberation Mono',monospace">命令:</div>
<div class="t" style="left:13px;top:357.15999999999997px;font-size:7.9px;color:#b6babe;font-family:'Liberation Mono',monospace">命令:</div>
<div class="t" style="left:13px;top:366.03999999999996px;font-size:7.9px;color:#b6babe;font-family:'Liberation Mono',monospace">命令:</div>
<div class="t" style="left:13px;top:374.91999999999996px;font-size:7.9px;color:#b6babe;font-family:'Liberation Mono',monospace">命令:</div>
<div class="t" style="left:13px;top:401.8px;font-size:7.9px;color:#c4c8cc;font-family:'Liberation Mono',monospace">指定对角点:</div>
<div class="t" style="left:5px;top:416.3px;font-size:6.2px;color:#d0d4d8;font-family:'Liberation Mono',monospace;letter-spacing:-0.6px">2.2842, 6.3663, 0.0000</div>
<svg style="left:0;top:0" width="800" height="423"><rect x="166.9" y="411.6" width="10.599999999999994" height="11.4" fill="#43668c" stroke="#5f95c8" stroke-width="0.6"/><rect x="179.5" y="411.6" width="10.25" height="11.4" fill="#43668c" stroke="#5f95c8" stroke-width="0.6"/><rect x="191.5" y="411.6" width="10.25" height="11.4" fill="#43668c" stroke="#5f95c8" stroke-width="0.6"/><rect x="215.75" y="411.6" width="10.25" height="11.4" fill="#43668c" stroke="#5f95c8" stroke-width="0.6"/><rect x="239.4" y="411.6" width="10.349999999999994" height="11.4" fill="#43668c" stroke="#5f95c8" stroke-width="0.6"/><g stroke="#e0e0e0" stroke-width="0.7" fill="none"><rect x="133.5" y="414" width="6.5" height="7"/><path d="M135.7 414v7M137.9 414v7M133.5 416.3h6.5M133.5 418.6h6.5"/></g><path d="M133.5 422.4h6.5" stroke="#4aa8f0" stroke-width="0.8"/><g stroke="#e0e0e0" stroke-width="0.7" fill="none"><rect x="145.5" y="414" width="6.5" height="7"/></g><path d="M147.6 414v7M149.8 414v7" stroke="#4aa8f0" stroke-width="0.8"/><path d="M157.5 413.5v8h7" stroke="#e0e0e0" stroke-width="0.8" fill="none"/><path d="M159 421v-2.5h2" stroke="#4aa8f0" stroke-width="0.7" fill="none"/><circle cx="172.2" cy="417.5" r="3.3" fill="none" stroke="#e0e0e0" stroke-width="0.8"/><circle cx="173.5" cy="418" r="1" fill="#4aa8f0"/><rect x="181.5" y="413.8" width="6.5" height="7" fill="none" stroke="#e0e0e0" stroke-width="0.8"/><rect x="181" y="413.3" width="2" height="2" fill="#e04040"/><path d="M193.5 421l6.5-6.5" stroke="#e0e0e0" stroke-width="0.8"/><path d="M193.5 421.3h6.5" stroke="#4aa8f0" stroke-width="0.8"/><path d="M204.5 413.5v8h7" stroke="#e0e0e0" stroke-width="0.8" fill="none"/><path d="M208 414.5l2.5-1.5-1 2.5h2l-3 3" stroke="#f2c230" stroke-width="0.9" fill="none"/><circle cx="219" cy="416.5" r="1" fill="#e0e0e0"/><path d="M219 416.5l3.5 2" stroke="#e0e0e0" stroke-width="0.6"/><ellipse cx="222" cy="419" rx="2.5" ry="1.5" fill="#4aa8f0"/><path d="M229.5 415h6.5M229.5 417.5h6.5M229.5 420h6.5" stroke="#f0f0f0" stroke-width="1.1"/><rect x="241.5" y="413.5" width="6.5" height="7.5" fill="#8fd0ff" stroke="#cfe8ff" stroke-width="0.6"/><rect x="253.5" y="413.5" width="6" height="7.5" fill="none" stroke="#d8d8d8" stroke-width="0.8"/><path d="M253.5 415.5h6M256.5 415.5v5.5" stroke="#d8d8d8" stroke-width="0.6"/><circle cx="266" cy="415" r="0.9" fill="#e0e0e0"/><circle cx="269.5" cy="419.5" r="2.2" fill="#8cd0ff"/><path d="M277.5 415.5h7M277.5 419.5h7" stroke="#e8e8e8" stroke-width="1.2"/><path d="M277.5 421.5h7" stroke="#4aa8f0" stroke-width="0.8"/><rect x="289" y="413.5" width="6.5" height="7.5" fill="none" stroke="#d8d8d8" stroke-width="0.8"/><path d="M289.5 414.5l5.5 5.5" stroke="#4aa8f0" stroke-width="1.5"/><path d="M303.8 415.5l-1.6 2 1.6 2" stroke="#8a9099" stroke-width="0.7" fill="none"/><rect x="309.5" y="414.5" width="6.5" height="6" fill="none" stroke="#e0e0e0" stroke-width="0.8"/><path d="M312 418l3.5-3.5" stroke="#f2c230" stroke-width="1"/><path d="M322.5 415.5l1.6 2-1.6 2" stroke="#8a9099" stroke-width="0.7" fill="none"/><g transform="translate(0,0.9)"><rect x="691" y="413.5" width="6" height="7.5" fill="none" stroke="#4aa8f0" stroke-width="0.8"/><path d="M691 416h6M691 418.5h6M694 416v2.5" stroke="#4aa8f0" stroke-width="0.6"/><path d="M714.5 416h3.5l-1.75 2.2z" fill="#e8e8e8"/><path d="M727.5 413v5M724 421.5l3.5-4 3.5 4" stroke="#4aa8f0" stroke-width="1.2" fill="none"/><path d="M727.5 412.5l-1 2h2z" fill="#4aa8f0"/><path d="M738 417.5v-4M734.5 421.5l3.5-4 3.5 4M735 413.5l3 4 3-4" stroke="#4aa8f0" stroke-width="1.1" fill="none"/><rect x="746" y="416.5" width="4.5" height="4.5" fill="none" stroke="#e0e0e0" stroke-width="0.8"/><circle cx="751.5" cy="415" r="2.3" fill="none" stroke="#e0e0e0" stroke-width="0.8"/><circle cx="760.5" cy="417.5" r="2.3" fill="none" stroke="#4aa8f0" stroke-width="1.3"/><circle cx="760.5" cy="417.5" r="3.8" fill="none" stroke="#4aa8f0" stroke-width="1.2" stroke-dasharray="1.2 1.2"/><rect x="767.5" y="414" width="7.5" height="7" rx="1" fill="none" stroke="#e0e0e0" stroke-width="0.8"/><path d="M769 417.5h4.5M770 416v3" stroke="#e0e0e0" stroke-width="0.6"/><path d="M778.5 415.5v-2h2M784.5 413.5h2v2M786.5 419.5v2h-2M780.5 421.5h-2v-2" stroke="#e0e0e0" stroke-width="0.8" fill="none"/><circle cx="782.5" cy="417.5" r="1" fill="#e0e0e0"/><path d="M790 414h7M790 417.5h7M790 421h7" stroke="#4aa8f0" stroke-width="1.1"/></g></svg>
<div class="t" style="left:700px;top:414.3px;font-size:6.6px;color:#cfd3d8;">英寸</div>
</body></html>
